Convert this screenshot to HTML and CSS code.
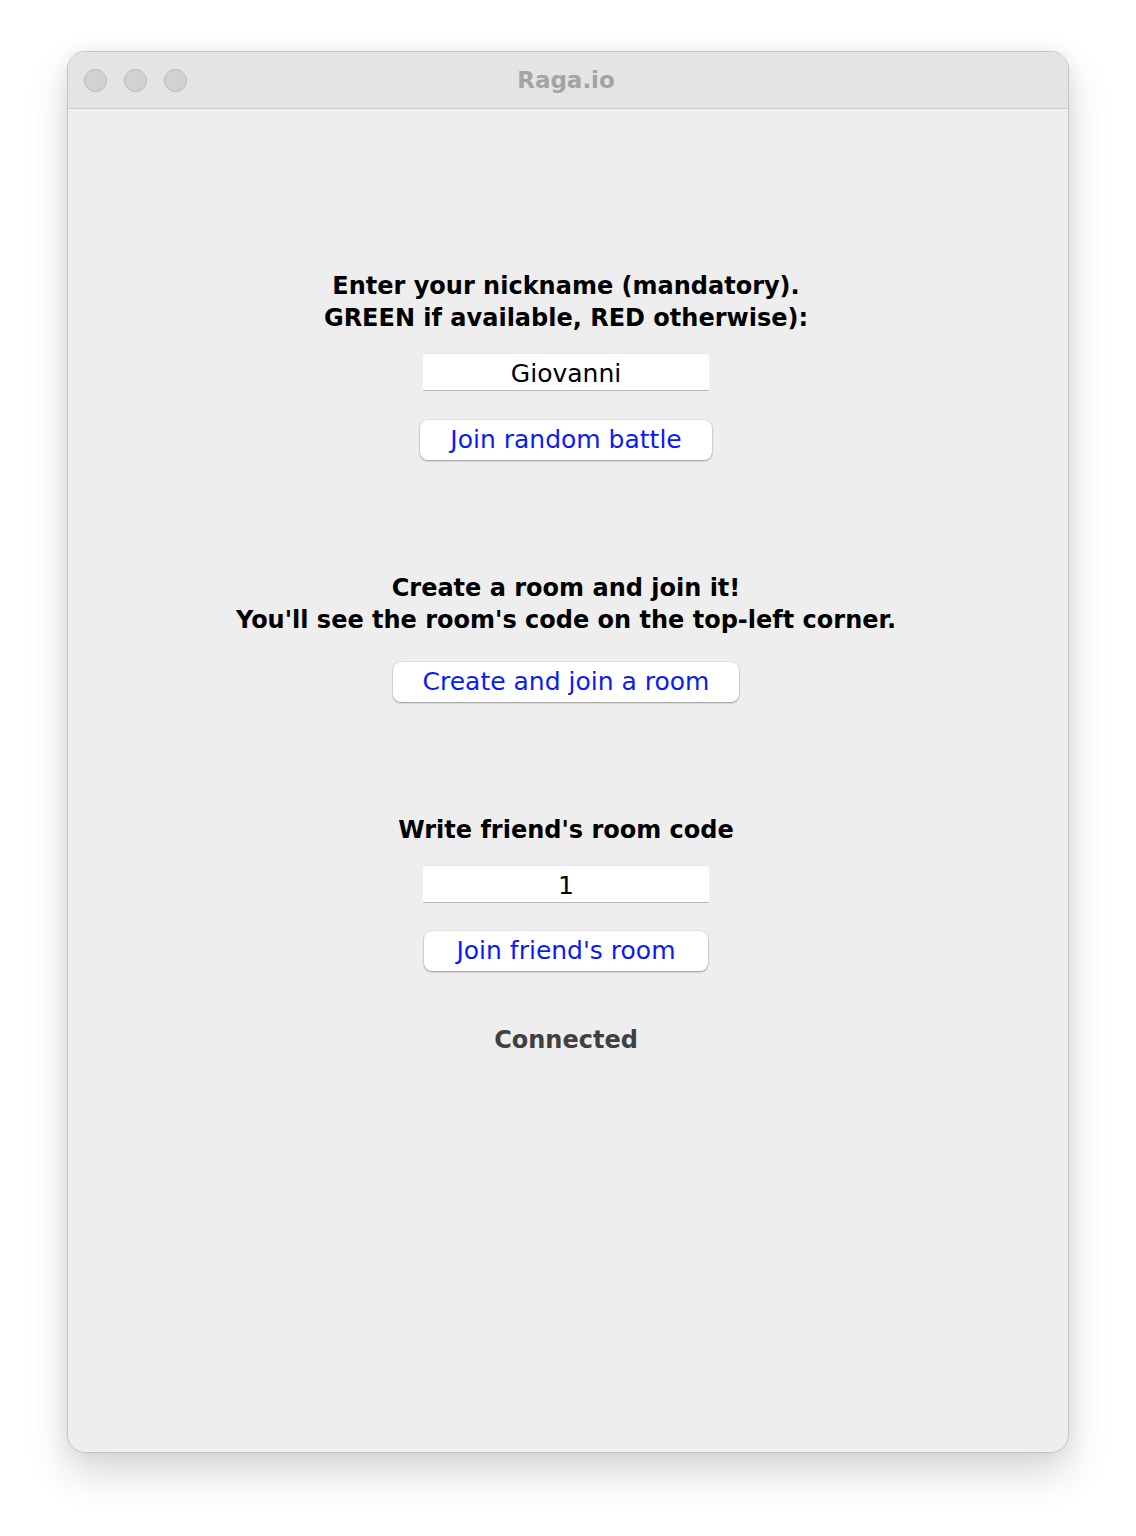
FILE: index.html
```html
<!DOCTYPE html>
<html>
<head>
<meta charset="utf-8">
<title>Raga.io</title>
<link rel="stylesheet" href="styles.css">
</head>
<body>
<div class="window">
  <div class="titlebar">
    <div class="lights">
      <span class="light"></span>
      <span class="light"></span>
      <span class="light"></span>
    </div>
    <div class="title">Raga.io</div>
  </div>
  <div class="content">
    <div class="section s1">
      <div class="label">Enter your nickname (mandatory).<br>GREEN if available, RED otherwise):</div>
      <div class="field">Giovanni</div>
      <div class="btn b1">Join random battle</div>
    </div>
    <div class="section s2">
      <div class="label">Create a room and join it!<br>You'll see the room's code on the top-left corner.</div>
      <div class="btn b2">Create and join a room</div>
    </div>
    <div class="section s3">
      <div class="label">Write friend's room code</div>
      <div class="field">1</div>
      <div class="btn b3">Join friend's room</div>
      <div class="status">Connected</div>
    </div>
  </div>
</div>
</body>
</html>
```
FILE: styles.css
```css
html, body {
  margin: 0;
  padding: 0;
  background: #ffffff;
}
body {
  width: 1136px;
  height: 1536px;
  padding-top: 51px;
  padding-left: 67px;
  box-sizing: border-box;
  font-family: "DejaVu Sans", "Liberation Sans", sans-serif;
}
.window {
  width: 1002px;
  height: 1402px;
  box-sizing: border-box;
  border: 1px solid #c4c4c4;
  border-radius: 18px;
  background: #eeeeee;
  overflow: hidden;
  box-shadow: 0 20px 40px rgba(0,0,0,0.16), 0 0 18px rgba(0,0,0,0.06);
  display: flex;
  flex-direction: column;
}
.titlebar {
  height: 56px;
  flex: none;
  background: #e4e4e4;
  border-bottom: 1px solid #cdcdcd;
  display: flex;
  align-items: center;
  position: relative;
}
.lights {
  display: flex;
  gap: 17px;
  padding-left: 16px;
  padding-top: 1px;
}
.light {
  width: 23px;
  height: 23px;
  box-sizing: border-box;
  border-radius: 50%;
  background: #d2d2d2;
  border: 1px solid #b9b9b9;
}
.title {
  position: absolute;
  left: 0;
  right: 4px;
  top: 0;
  bottom: 0;
  display: flex;
  align-items: center;
  justify-content: center;
  font-weight: bold;
  font-size: 23px;
  color: #a4a4a4;
  padding-bottom: 1px;
}
.content {
  flex: 1;
  display: flex;
  flex-direction: column;
  align-items: center;
  padding-right: 4px;
}
.section {
  display: flex;
  flex-direction: column;
  align-items: center;
}
.label {
  font-weight: bold;
  font-size: 24px;
  line-height: 32px;
  color: #000;
  text-align: center;
}
.s1 { margin-top: 161px; }
.s2 { margin-top: 112px; }
.s3 { margin-top: 112px; }
.field {
  background: #fff;
  width: 286px;
  height: 38px;
  box-sizing: border-box;
  border-top: 1px solid #e6e6e6;
  border-bottom: 1px solid #b7b7b7;
  font-size: 25px;
  line-height: 32px;
  padding-top: 4px;
  text-align: center;
  color: #000;
  margin-top: 19px;
}
.btn {
  background: #fff;
  height: 40px;
  box-sizing: border-box;
  border-radius: 8px;
  box-shadow: 0 1px 2px rgba(0,0,0,0.35), 0 0 0 0.5px rgba(0,0,0,0.08);
  color: #0a1cf5;
  font-size: 25px;
  line-height: 40px;
  text-align: center;
}
.b1 { width: 292px; margin-top: 29px; }
.b2 { width: 346px; margin-top: 26px; }
.b3 { width: 284px; margin-top: 28px; }
.status {
  margin-top: 55px;
  font-weight: bold;
  font-size: 24px;
  color: #404040;
}
```
